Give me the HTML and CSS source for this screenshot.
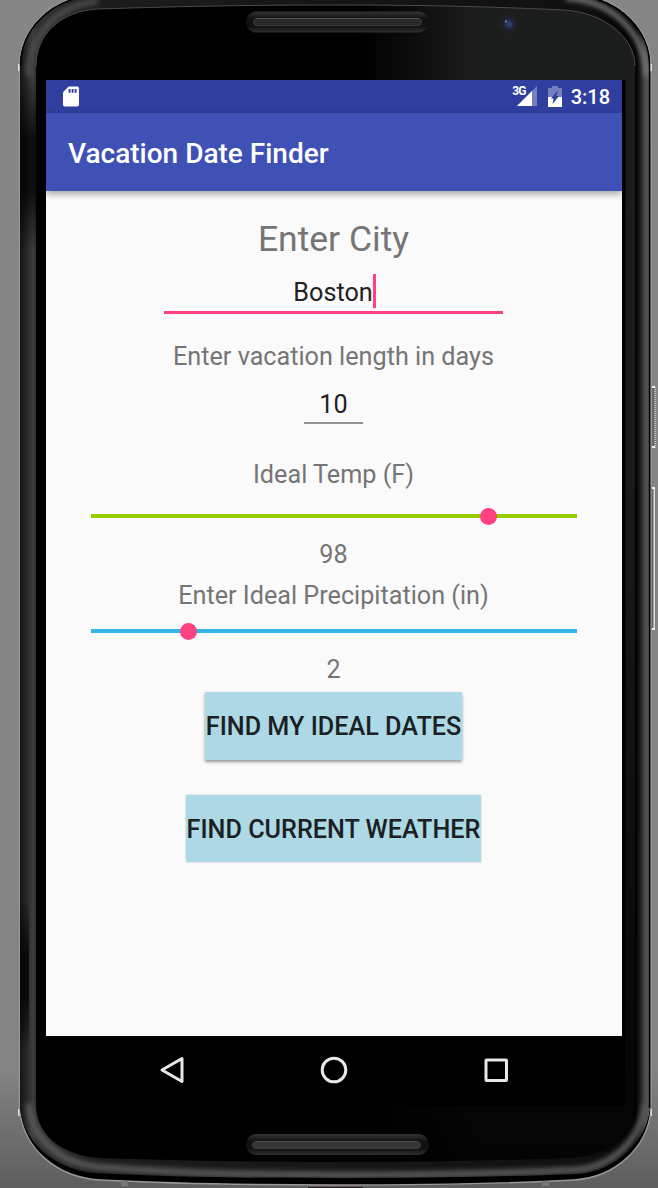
FILE: index.html
```html
<!DOCTYPE html>
<html lang="en">
<head>
<meta charset="utf-8">
<title>Vacation Date Finder</title>
<link rel="stylesheet" href="styles.css">
</head>
<body>
<div class="stage">
  <svg class="device" viewBox="0 0 658 1188" aria-hidden="true">
    <defs>
      <linearGradient id="backdrop" x1="0" y1="0" x2="0" y2="1">
        <stop offset="0" stop-color="#868686"/><stop offset=".9" stop-color="#838383"/><stop offset="1" stop-color="#5e5e5e"/>
      </linearGradient>
      <linearGradient id="rim" gradientUnits="userSpaceOnUse" x1="20" y1="0" x2="650" y2="0">
        <stop offset="0" stop-color="#151515"/><stop offset=".008" stop-color="#222"/><stop offset=".02" stop-color="#3c3c3c"/><stop offset=".026" stop-color="#303030"/>
        <stop offset=".12" stop-color="#1c1c1c"/><stop offset=".9" stop-color="#101010"/>
        <stop offset=".977" stop-color="#000"/><stop offset=".984" stop-color="#1a1a1a"/><stop offset=".992" stop-color="#4d4c4a"/><stop offset="1" stop-color="#5a5855"/>
      </linearGradient>
      <linearGradient id="dim" x1="0" y1="0" x2="0" y2="1">
        <stop offset="0" stop-color="#000" stop-opacity="0"/><stop offset=".35" stop-color="#000" stop-opacity=".75"/><stop offset=".65" stop-color="#000" stop-opacity=".75"/><stop offset="1" stop-color="#000" stop-opacity="0"/>
      </linearGradient>
      <linearGradient id="glare" gradientUnits="userSpaceOnUse" x1="360" y1="0" x2="480" y2="0">
        <stop offset="0" stop-color="#1c1e1d" stop-opacity="0"/><stop offset="1" stop-color="#1c1e1d"/>
      </linearGradient>
      <linearGradient id="fade" gradientUnits="userSpaceOnUse" x1="0" y1="0" x2="0" y2="1188">
        <stop offset="0" stop-color="#fff"/><stop offset=".45" stop-color="#ddd"/><stop offset=".8" stop-color="#555"/><stop offset="1" stop-color="#1c1c1c"/>
      </linearGradient>
      <linearGradient id="slot" x1="0" y1="0" x2="0" y2="1">
        <stop offset="0" stop-color="#343434"/><stop offset=".35" stop-color="#111"/><stop offset=".7" stop-color="#111"/><stop offset="1" stop-color="#303030"/>
      </linearGradient>
      <radialGradient id="lens"><stop offset="0" stop-color="#3a4a70"/><stop offset=".6" stop-color="#202a44"/><stop offset="1" stop-color="#1b1f2c"/></radialGradient>
      <mask id="fadeMask"><rect width="658" height="1188" fill="url(#fade)"/></mask>
      <path id="glass" d="M36 66C36 34 61 11 98 9C190 6 260 5 335 5C410 5 480 6 563 10C602 12 635 36 635 66V1104C635 1132 608 1157 569 1158C480 1161 400 1162 335 1162C260 1162 190 1161 100 1158C62 1155 36 1136 36 1104Z"/>
      <filter id="soft" filterUnits="userSpaceOnUse" x="-20" y="-20" width="700" height="1230"><feGaussianBlur stdDeviation="2.500"/></filter>
      <clipPath id="body"><path d="M20 66C20 30 50 -1 90 -4V-9H580V-4C620 -1 650 30 650 66V1108C646 1144 615 1171 578 1174C500 1177 410 1178 335 1178C250 1178 170 1177 95 1173C55 1170 23 1142 20 1108Z"/></clipPath>
    </defs>
    <rect width="658" height="1188" fill="url(#backdrop)"/>
    <path d="M19.500 66V1110C24 1148 55 1177 100 1180C180 1184 260 1185 335 1185C410 1185 500 1184 574 1180C616 1177 647 1148 651 1110V66C651 30 620 -2 580 -5H90C50 -2 19.500 30 19.500 66Z" fill="#000" stroke="#999" stroke-width="1.400"/>
    <g clip-path="url(#body)">
      <rect x="19" y="-9" width="632" height="1190" fill="url(#rim)"/>
      <rect x="20" y="80" width="16" height="170" fill="url(#dim)"/>
      <rect x="20" y="900" width="9" height="150" fill="url(#dim)"/>
      <path d="M29 1104C31 1139 60 1163 98 1167C170 1173 250 1175 335 1175C410 1175 500 1174 576 1170C613 1167 640 1140 646 1104" fill="none" stroke="#565656" stroke-width="7" filter="url(#soft)"/>
      <path d="M29 76C28 35 58 5 98 1" fill="none" stroke="#4b4b4b" stroke-width="6" filter="url(#soft)"/>
      <path d="M566 -2C610 0 644 30 647 76" fill="none" stroke="#777" stroke-width="5" filter="url(#soft)"/>
    </g>
    <path d="M20.500 66C20.500 30 50 0 90 -4M580 -4C620 0 649.500 30 649.500 66V1108" fill="none" stroke="#000" stroke-width="1.400"/>
    <use href="#glass" fill="#000"/>
    <g mask="url(#fadeMask)"><use href="#glass" fill="url(#glare)"/></g>
    <path d="M36 66C36 34 61 11 98 9C190 6 260 5 335 5C410 5 480 6 563 10C602 12 635 36 635 66" fill="none" stroke="#4b4b4b" stroke-width="1"/>
    <path d="M46 80H625.500V1106H46Z" fill="#000"/>
    <g fill="#ddd"><rect x="18" y="64" width="1.500" height="7"/><rect x="650.500" y="64" width="1.500" height="7"/><rect x="18" y="1109" width="1.500" height="7"/><rect x="650.500" y="1109" width="1.500" height="7"/></g>
    <g fill="url(#slot)"><rect x="246" y="11.500" width="183" height="21" rx="10.500"/><rect x="246" y="1134" width="183" height="21" rx="10.500"/></g>
    <g fill="#292929" stroke="#3b3b3b"><rect x="253.500" y="18.500" width="168" height="7" rx="3.500"/><rect x="252.500" y="1141.500" width="168" height="7" rx="3.500" fill="#363636"/></g>
    <path d="M256 18.500H419M256 1141.500H417" stroke="#505250"/>
    <circle cx="509" cy="23.500" r="10" fill="#202022"/><circle cx="509" cy="24" r="7" fill="url(#lens)"/><circle cx="506" cy="21.500" r="1" fill="#7398c9"/>
    <path d="M653.500 387V448" stroke="#666" stroke-width="3"/><path d="M655 387V448" stroke="#d5d5d5" stroke-width="1.500" stroke-dasharray="1 1"/>
    <path d="M652.500 488V629" stroke="#666" stroke-width="1.500"/><path d="M654.300 488V629" stroke="#ddd" stroke-width="1.400"/>
    <g fill="#f0f0f0"><rect x="652" y="386" width="3" height="2"/><rect x="652" y="446" width="3" height="2"/><rect x="652" y="487" width="3" height="2"/><rect x="652" y="628" width="3" height="2"/></g>
    <g fill="#777"><rect x="121" y="1181" width="7" height="5"/><rect x="542" y="1181" width="7" height="5"/></g>
    <rect x="308" y="1187" width="55" height="1" fill="#251b20"/>
  </svg>

  <main class="screen">
    <header class="status">
      <svg class="sd" viewBox="0 0 17 21"><path d="M6 0H15Q17 0 17 2V19Q17 21 15 21H2Q0 21 0 19V6Z" fill="#fff"/><path d="M6 2.500H8V6.500H6ZM9.200 2.500H11.200V6.500H9.200ZM12.400 2.500H14.400V6.500H12.400Z" fill="#303f9f"/></svg>
      <div class="indicators">
        <span class="network">3G</span>
        <svg class="signal" viewBox="0 0 20 20"><path d="M20 0V20H0Z" fill="#7780bf"/><path d="M15 5V20H0Z" fill="#fff"/></svg>
        <svg class="battery" viewBox="0 0 14 21"><path d="M4 0H10V2H14V21H0V2H4Z" fill="#7780bf"/><path d="M0 11H14V21H0Z" fill="#fff"/><path d="M9.500 4.500L8.500 10H11L4.500 18L5.500 12.500H3Z" fill="#303f9f"/></svg>
        <span class="clock">3:18</span>
      </div>
    </header>
    <h1 class="appbar">Vacation Date Finder</h1>
    <section class="form">
      <h2 class="heading">Enter City</h2>
      <div class="field city"><span>Boston</span><i class="caret"></i></div>
      <p class="label length-label">Enter vacation length in days</p>
      <div class="field days"><span>10</span></div>
      <p class="label temp-label">Ideal Temp (F)</p>
      <div class="slider temp"><i class="thumb" style="left:397px"></i></div>
      <p class="label value">98</p>
      <p class="label rain-label">Enter Ideal Precipitation (in)</p>
      <div class="slider rain"><i class="thumb" style="left:97px"></i></div>
      <p class="label value">2</p>
      <button class="action ideal">FIND MY IDEAL DATES</button>
      <button class="action current">FIND CURRENT WEATHER</button>
    </section>
    <nav class="navbar">
      <svg viewBox="0 0 28 28"><path d="M24 2.500V25.500L4 14Z"/></svg>
      <svg viewBox="0 0 28 28"><circle cx="14" cy="14" r="11.800"/></svg>
      <svg viewBox="0 0 28 28"><rect x="4" y="4" width="20.500" height="20.500" rx=".5"/></svg>
    </nav>
  </main>
</div>
</body>
</html>
```

FILE: styles.css
```css
* { box-sizing: border-box; }
body { margin: 0; font-family: Roboto, sans-serif; }
.stage { position: relative; width: 658px; height: 1188px; padding: 80px 36px 0 46px; overflow: hidden; }
.device { position: absolute; inset: 0; width: 658px; height: 1188px; }
.screen { position: relative; width: 576px; height: 1026px; display: flex; flex-direction: column; }
.status { height: 33px; padding: 0 12px 0 17px; background: #303f9f; color: #fff; display: flex; justify-content: space-between; }
.sd { width: 16px; height: 21px; margin-top: 6px; }
.indicators { display: flex; align-items: flex-start; }
.network { font-size: 12px; line-height: 14px; font-weight: 700; margin: 4px -9px 0 0; z-index: 1; letter-spacing: -.8px; }
.signal { width: 20px; height: 20px; margin-top: 6px; }
.battery { width: 14px; height: 21px; margin: 6px 9px 0 11px; }
.clock { font-size: 20px; font-weight: 500; line-height: 34px; }
.appbar { position: relative; z-index: 1; height: 78px; margin: 0; padding-left: 22px; background: #3f51b5; color: #fff; font-size: 28px; line-height: 82px; font-weight: 500; box-shadow: 0 3px 7px rgba(0, 0, 0, .35); }
.form { flex: 0 0 845px; padding: 27px 1px 0 0; background: #fafafa; color: #757575; display: flex; flex-direction: column; align-items: center; overflow: hidden; }
.heading { margin: 0; font-size: 35.500px; line-height: 42px; font-weight: 400; }
.label { margin: 0; font-size: 25.200px; line-height: 30px; white-space: nowrap; }
.field { display: flex; justify-content: center; color: #212121; font-size: 25.200px; }
.city { width: 339px; height: 40px; margin-top: 14px; border-bottom: 3px solid #ff4081; line-height: 38px; }
.city span { margin-left: -1px; }
.caret { width: 3px; height: 34px; background: #ff4081; margin-right: -3px; }
.length-label { margin-top: 28px; }
.days { width: 59px; height: 35px; margin-top: 17px; border-bottom: 2px solid #919191; line-height: 32px; }
.temp-label { margin-top: 36px; }
.slider { position: relative; width: 486px; height: 4px; }
.thumb { position: absolute; top: -6px; width: 17px; height: 17px; margin-left: -8px; border-radius: 50%; background: #ff4081; }
.temp { margin-top: 24px; background: #99cc00; }
.rain { margin-top: 18px; background: #33b5e5; }
.value { margin-top: 22px; }
.rain-label { margin-top: 11px; }
.action { height: 68px; padding: 0; border: 0; background: #add8e6; color: #1b2022; font-family: inherit; font-size: 25.200px; line-height: 70px; font-weight: 500; white-space: nowrap; }
.ideal { width: 257px; margin-top: 7px; box-shadow: 0 2px 3px rgba(0, 0, 0, .4); }
.current { width: 295px; height: 67px; margin-top: 35px; box-shadow: 0 0 2px rgba(0, 0, 0, .2); }
.navbar { height: 70px; padding: 0 112px 2px; background: #000; display: flex; justify-content: space-between; align-items: center; }
.navbar svg { width: 28px; height: 28px; fill: none; stroke: #e8e8e8; stroke-width: 3; stroke-linejoin: round; }
```
